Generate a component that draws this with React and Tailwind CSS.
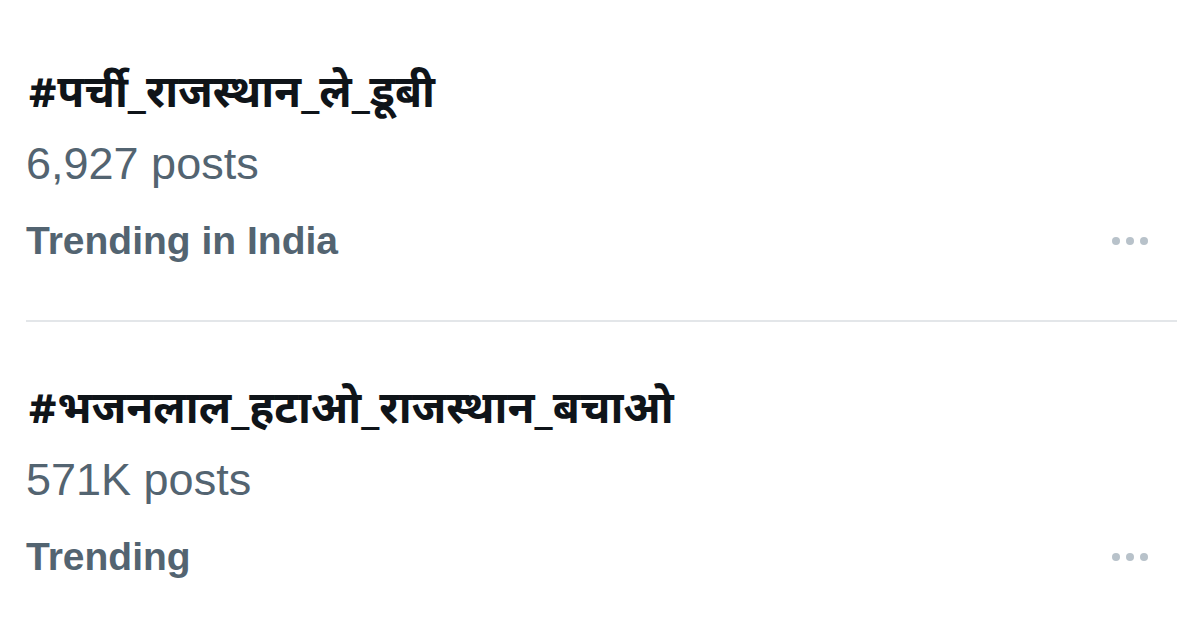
const trends = [
  {
    tag: '#पर्ची_राजस्थान_ले_डूबी',
    posts: '6,927 posts',
    label: 'Trending in India',
  },
  {
    tag: '#भजनलाल_हटाओ_राजस्थान_बचाओ',
    posts: '571K posts',
    label: 'Trending',
  },
];

function MoreDots() {
  return (
    <div className="flex items-center gap-[6px] pr-[52px]">
      <span className="w-[8px] h-[8px] rounded-full bg-[#b8c2ca]" />
      <span className="w-[8px] h-[8px] rounded-full bg-[#b8c2ca]" />
      <span className="w-[8px] h-[8px] rounded-full bg-[#b8c2ca]" />
    </div>
  );
}

function TrendItem({ trend }) {
  return (
    <div className="flex flex-col pl-[26px]">
      <div className="pl-[2px] text-[44px] leading-[56px] font-bold text-[#0f1419] font-['Noto_Sans_Devanagari','Lohit_Devanagari','Noto_Sans',sans-serif]">
        {trend.tag}
      </div>
      <div className="mt-[16px] text-[45px] leading-[46px] text-[#536471] font-['Liberation_Sans',Arial,sans-serif]">
        {trend.posts}
      </div>
      <div className="mt-[35px] flex items-center justify-between">
        <span className="text-[39px] leading-[38px] font-bold text-[#536471] font-['Liberation_Sans',Arial,sans-serif]">
          {trend.label}
        </span>
        <MoreDots />
      </div>
    </div>
  );
}

export default function App() {
  return (
    <div className="w-[1200px] h-[633px] bg-white overflow-hidden pt-[69px]">
      <TrendItem trend={trends[0]} />
      <div className="mt-[60px] mb-[63px] ml-[26px] mr-[23px] h-[2px] bg-[#e3e6e9]" />
      <TrendItem trend={trends[1]} />
    </div>
  );
}
